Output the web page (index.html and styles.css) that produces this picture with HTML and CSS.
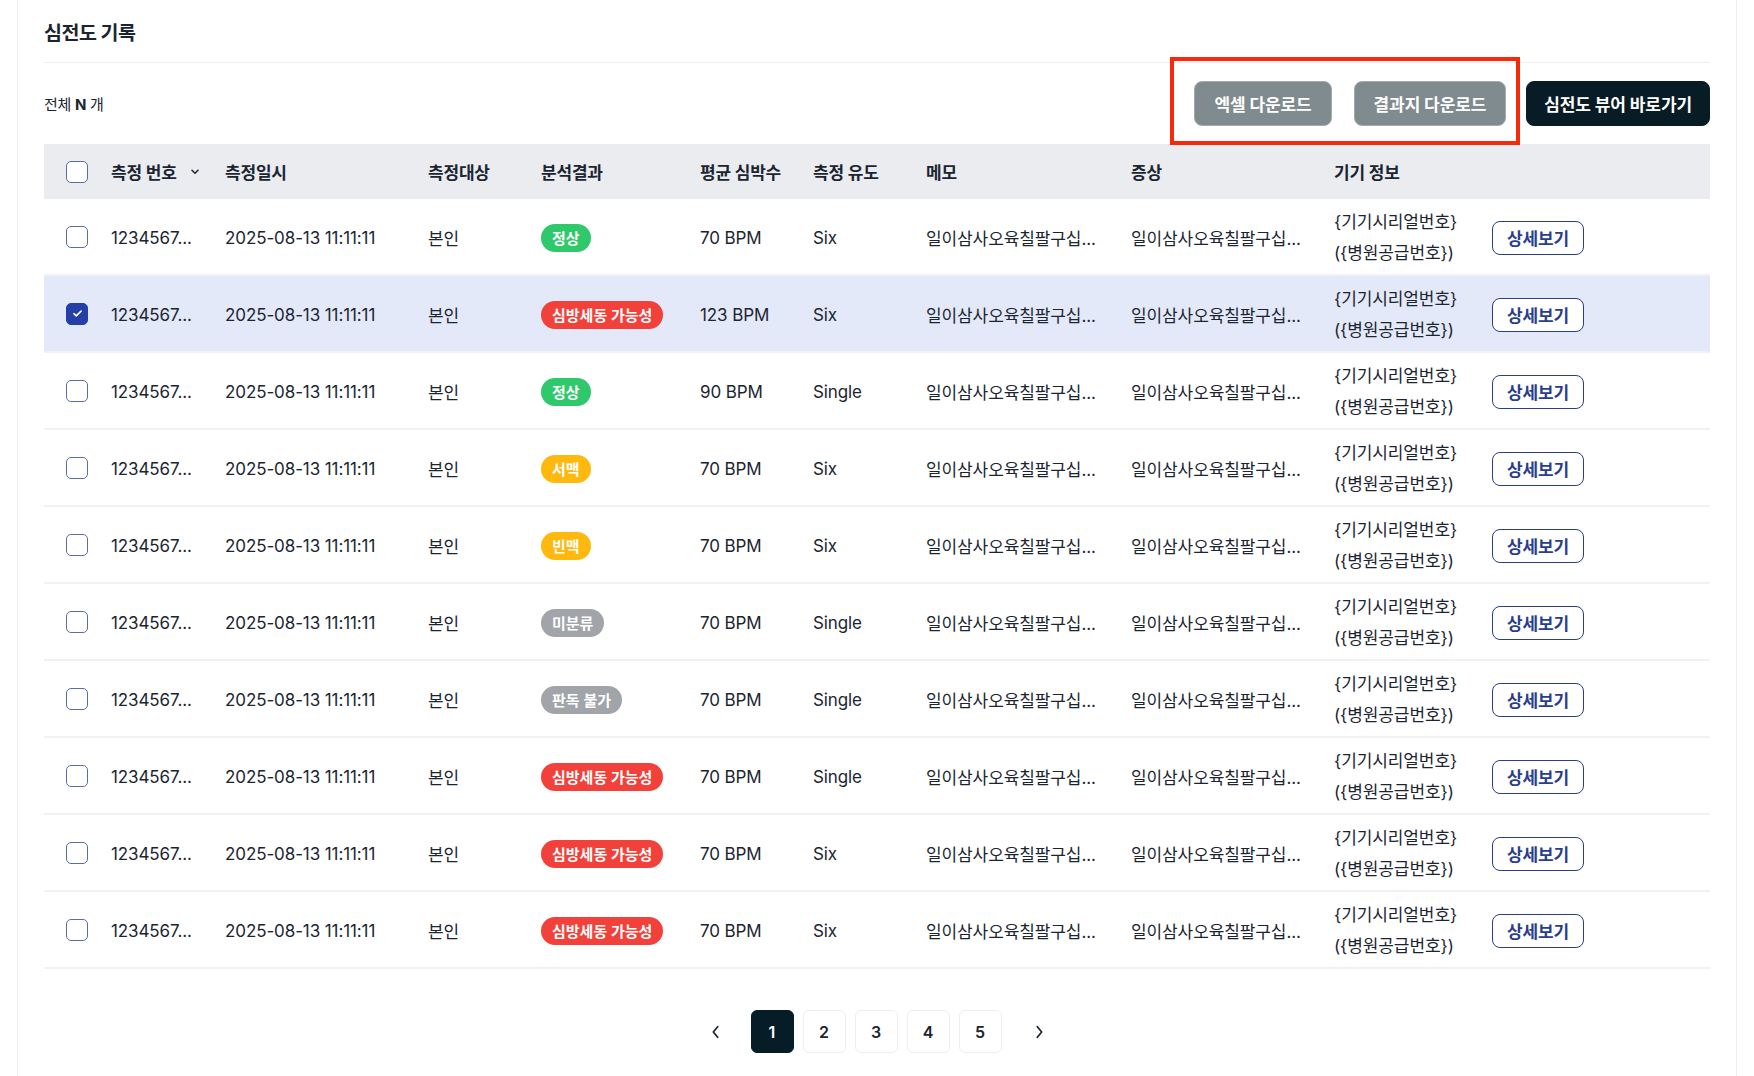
FILE: index.html
```html
<!DOCTYPE html>
<html lang="ko">
<head>
<meta charset="utf-8">
<title>심전도 기록</title>
<link rel="stylesheet" href="styles.css">
</head>
<body>
<div class="card">
  <h1 class="title">심전도 기록</h1>
  <div class="toolbar">
    <div class="count">전체 <b>N</b> 개</div>
    <div class="actions">
      <div class="dl-group">
        <button class="btn btn-gray">엑셀 다운로드</button>
        <button class="btn btn-gray">결과지 다운로드</button>
        <span class="highlight-box"></span>
      </div>
      <button class="btn btn-dark">심전도 뷰어 바로가기</button>
    </div>
  </div>

  <div class="table">
    <div class="row thead">
      <span class="cb"></span>
      <span class="th sort">측정 번호 <svg class="chev" viewBox="0 0 8 6" width="8" height="6"><path d="M1 1.2 4 4.2 7 1.2" fill="none" stroke="#1b2530" stroke-width="1.5" stroke-linecap="round" stroke-linejoin="round"/></svg></span>
      <span class="th">측정일시</span>
      <span class="th">측정대상</span>
      <span class="th">분석결과</span>
      <span class="th">평균 심박수</span>
      <span class="th">측정 유도</span>
      <span class="th">메모</span>
      <span class="th">증상</span>
      <span class="th">기기 정보</span>
      <span></span>
    </div>

    <div class="row">
      <span class="cb"></span><span>1234567...</span><span>2025-08-13 11:11:11</span><span>본인</span>
      <span><em class="badge green">정상</em></span><span>70 BPM</span><span>Six</span>
      <span>일이삼사오육칠팔구십...</span><span>일이삼사오육칠팔구십...</span>
      <span class="device">{기기시리얼번호}<br>({병원공급번호})</span><span><button class="detail">상세보기</button></span>
    </div>
    <div class="row selected">
      <span class="cb checked"><svg viewBox="0 0 12 10" width="11" height="9"><path d="M2 5.2 4.6 7.6 10 2.4" fill="none" stroke="#fff" stroke-width="1.8" stroke-linecap="round" stroke-linejoin="round"/></svg></span><span>1234567...</span><span>2025-08-13 11:11:11</span><span>본인</span>
      <span><em class="badge red">심방세동 가능성</em></span><span>123 BPM</span><span>Six</span>
      <span>일이삼사오육칠팔구십...</span><span>일이삼사오육칠팔구십...</span>
      <span class="device">{기기시리얼번호}<br>({병원공급번호})</span><span><button class="detail">상세보기</button></span>
    </div>
    <div class="row">
      <span class="cb"></span><span>1234567...</span><span>2025-08-13 11:11:11</span><span>본인</span>
      <span><em class="badge green">정상</em></span><span>90 BPM</span><span>Single</span>
      <span>일이삼사오육칠팔구십...</span><span>일이삼사오육칠팔구십...</span>
      <span class="device">{기기시리얼번호}<br>({병원공급번호})</span><span><button class="detail">상세보기</button></span>
    </div>
    <div class="row">
      <span class="cb"></span><span>1234567...</span><span>2025-08-13 11:11:11</span><span>본인</span>
      <span><em class="badge yellow">서맥</em></span><span>70 BPM</span><span>Six</span>
      <span>일이삼사오육칠팔구십...</span><span>일이삼사오육칠팔구십...</span>
      <span class="device">{기기시리얼번호}<br>({병원공급번호})</span><span><button class="detail">상세보기</button></span>
    </div>
    <div class="row">
      <span class="cb"></span><span>1234567...</span><span>2025-08-13 11:11:11</span><span>본인</span>
      <span><em class="badge yellow">빈맥</em></span><span>70 BPM</span><span>Six</span>
      <span>일이삼사오육칠팔구십...</span><span>일이삼사오육칠팔구십...</span>
      <span class="device">{기기시리얼번호}<br>({병원공급번호})</span><span><button class="detail">상세보기</button></span>
    </div>
    <div class="row">
      <span class="cb"></span><span>1234567...</span><span>2025-08-13 11:11:11</span><span>본인</span>
      <span><em class="badge gray">미분류</em></span><span>70 BPM</span><span>Single</span>
      <span>일이삼사오육칠팔구십...</span><span>일이삼사오육칠팔구십...</span>
      <span class="device">{기기시리얼번호}<br>({병원공급번호})</span><span><button class="detail">상세보기</button></span>
    </div>
    <div class="row">
      <span class="cb"></span><span>1234567...</span><span>2025-08-13 11:11:11</span><span>본인</span>
      <span><em class="badge gray">판독 불가</em></span><span>70 BPM</span><span>Single</span>
      <span>일이삼사오육칠팔구십...</span><span>일이삼사오육칠팔구십...</span>
      <span class="device">{기기시리얼번호}<br>({병원공급번호})</span><span><button class="detail">상세보기</button></span>
    </div>
    <div class="row">
      <span class="cb"></span><span>1234567...</span><span>2025-08-13 11:11:11</span><span>본인</span>
      <span><em class="badge red">심방세동 가능성</em></span><span>70 BPM</span><span>Single</span>
      <span>일이삼사오육칠팔구십...</span><span>일이삼사오육칠팔구십...</span>
      <span class="device">{기기시리얼번호}<br>({병원공급번호})</span><span><button class="detail">상세보기</button></span>
    </div>
    <div class="row">
      <span class="cb"></span><span>1234567...</span><span>2025-08-13 11:11:11</span><span>본인</span>
      <span><em class="badge red">심방세동 가능성</em></span><span>70 BPM</span><span>Six</span>
      <span>일이삼사오육칠팔구십...</span><span>일이삼사오육칠팔구십...</span>
      <span class="device">{기기시리얼번호}<br>({병원공급번호})</span><span><button class="detail">상세보기</button></span>
    </div>
    <div class="row">
      <span class="cb"></span><span>1234567...</span><span>2025-08-13 11:11:11</span><span>본인</span>
      <span><em class="badge red">심방세동 가능성</em></span><span>70 BPM</span><span>Six</span>
      <span>일이삼사오육칠팔구십...</span><span>일이삼사오육칠팔구십...</span>
      <span class="device">{기기시리얼번호}<br>({병원공급번호})</span><span><button class="detail">상세보기</button></span>
    </div>
  </div>

  <div class="pager">
    <span class="arrow prev"><svg viewBox="0 0 10 16" width="9" height="14"><path d="M7.5 2 2.5 8 7.5 14" fill="none" stroke="#1b2530" stroke-width="2" stroke-linecap="round" stroke-linejoin="round"/></svg></span>
    <span class="page active">1</span>
    <span class="page">2</span>
    <span class="page">3</span>
    <span class="page">4</span>
    <span class="page">5</span>
    <span class="arrow next"><svg viewBox="0 0 10 16" width="9" height="14"><path d="M2.5 2 7.5 8 2.5 14" fill="none" stroke="#1b2530" stroke-width="2" stroke-linecap="round" stroke-linejoin="round"/></svg></span>
  </div>
</div>
</body>
</html>
```

FILE: styles.css
```css
* { box-sizing: border-box; }
html, body { margin: 0; padding: 0; background: #fff; }
body {
  font-family: "Inter", "Noto Sans CJK KR", sans-serif;
  color: #1b2530;
  height: 1076px;
  overflow: hidden;
}
.card {
  margin: 0 17px;
  border-left: 1px solid #ebedf0;
  border-right: 1px solid #ebedf0;
  padding: 19px 26px 0 26px;
  min-height: 1076px;
}
.title {
  margin: 0;
  font-size: 19.5px;
  font-weight: 700;
  line-height: 28px;
  padding-bottom: 15px;
  border-bottom: 1px solid #eceef0;
  letter-spacing: -0.5px;
}
.toolbar {
  display: flex;
  align-items: center;
  justify-content: space-between;
  margin-top: 18px;
}
.count { font-size: 15px; letter-spacing: -0.3px; }
.count b { font-weight: 700; }
.actions { display: flex; align-items: center; gap: 20px; }
.dl-group { position: relative; display: flex; gap: 22px; }
.btn {
  font-family: inherit;
  height: 45px;
  border-radius: 8px;
  font-size: 17px;
  font-weight: 700;
  color: #fff;
  padding: 0 19px;
  letter-spacing: -0.1px;
  cursor: pointer;
}
.btn-gray { background: #7f8b8e; border: 1px solid #a3abad; }
.btn-dark { background: #081c25; border: 1px solid #081c25; padding: 0 17px; }
.highlight-box {
  position: absolute;
  left: -24px; top: -24px; right: -14px; bottom: -19px;
  border: 4px solid #f5290b;
  pointer-events: none;
}
.table { margin-top: 18px; }
.row {
  display: grid;
  grid-template-columns: 45px 114px 203px 113px 159px 113px 113px 205px 203px 158px 1fr;
  align-items: center;
  height: 77px;
  padding-left: 22px;
  border-bottom: 2px solid #f1f2f4;
  font-size: 17px;
  letter-spacing: -0.1px;
  white-space: nowrap;
}
.row > span { padding-top: 2px; }
.row.thead {
  height: 55px;
  background: #eaecf0;
  border-bottom: none;
  font-weight: 700;
  letter-spacing: -0.2px;
}
.row.thead > span { padding-top: 0; }
.row.selected { background: #e3e9f8; }
.th.sort { display: flex; align-items: center; }
.chev { margin-left: 14px; }
.row > .cb {
  width: 22px; height: 22px;
  padding: 0;
  border: 1.5px solid #5b6da6;
  border-radius: 5px;
  background: #fff;
  display: flex; align-items: center; justify-content: center;
}
.row > .cb.checked { background: #2440a6; border-color: #2440a6; }
.badge {
  display: inline-flex;
  align-items: center;
  height: 28px;
  padding: 0 11px;
  border-radius: 14px;
  font-style: normal;
  font-size: 15px;
  font-weight: 600;
  color: #fff;
  letter-spacing: 0;
}
.badge.green { background: #2fc86b; }
.badge.red { background: #f2413a; }
.badge.yellow { background: #ffb80d; }
.badge.gray { background: #a1a4a8; }
.device { line-height: 31px; white-space: nowrap; }
.detail {
  font-family: inherit;
  width: 92px; height: 34px;
  border: 1.5px solid #2a3e8c;
  border-radius: 8px;
  background: #fff;
  color: #2a3e8c;
  font-size: 17px;
  font-weight: 700;
  letter-spacing: -0.2px;
  padding: 0;
}
.pager {
  display: flex;
  justify-content: center;
  align-items: center;
  gap: 9px;
  margin-top: 41px;
}
.page, .arrow {
  width: 43px; height: 43px;
  display: flex; align-items: center; justify-content: center;
  font-size: 16px;
  font-weight: 600;
}
.page { border: 1px solid #eceef0; border-radius: 6px; }
.page.active { background: #061c26; border-color: #061c26; color: #fff; }
.arrow.prev { margin-right: 5px; }
.arrow.next { margin-left: 7px; }
```
